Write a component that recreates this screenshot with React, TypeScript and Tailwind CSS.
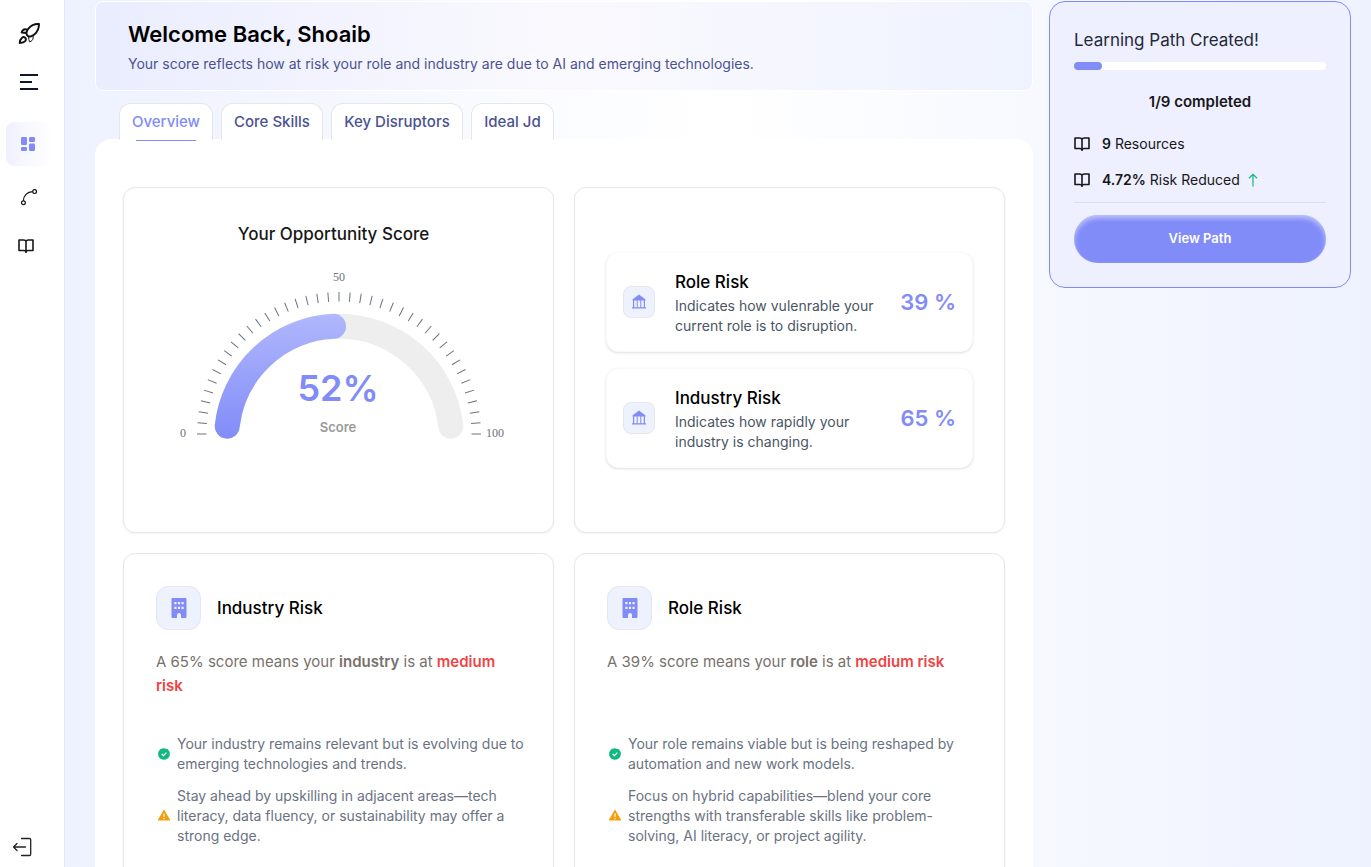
import type { ReactNode } from "react";

const TICKS = Array.from({ length: 41 }, (_, i) => i);

function RocketIcon() {
  return (
    <svg viewBox="0 0 24 24" className="size-6" fill="none" stroke="#111" strokeWidth="1.9" strokeLinecap="round" strokeLinejoin="round">
      <path d="M22 2c-4.300-.3-8 1.400-10.400 4.300-1.500 1.800-2.200 3.400-2.200 4.700 0 1.100.4 2 1.200 2.700.8.700 1.800 1 2.900.8 1.500-.3 2.800-1 4.100-2.200C20.500 9.700 22 6 22 2Z" />
      <path d="M10.200 7.600C8.500 7 6.900 7.300 5.800 8.300c-.7.600-1 1.400-1.200 2.200 1.500.1 3 .2 4.600.5" />
      <path d="M16 13.600c.4 1.800.2 3.500-.8 4.700-.7.800-1.600 1.300-2.700 1.500-.6-1.400-.9-3-.8-4.800" strokeWidth="1" />
      <path d="M8.300 15.900c-.9-.9-2.300-1-3.300-.2-1.500 1.200-2.200 3.400-2.300 5.400 2-.1 4.400-.6 5.500-1.900.8-1 .9-2.400.1-3.300Z" />
    </svg>
  );
}

function MenuIcon() {
  return (
    <svg viewBox="0 0 20 20" className="size-5" stroke="#0f172a" strokeWidth="2">
      <path d="M1 3h18M1 10h12M1 17h18" />
    </svg>
  );
}

function DashboardIcon() {
  return (
    <svg viewBox="0 0 16 16" className="size-4" fill="#818cf8">
      <rect x="1" y="1" width="6" height="8" rx="1.200" />
      <rect x="9" y="1" width="6" height="5" rx="1.200" />
      <rect x="1" y="11" width="6" height="4" rx="1.200" />
      <rect x="9" y="7.500" width="6" height="7.500" rx="1.200" />
    </svg>
  );
}

function PathIcon() {
  return (
    <svg viewBox="0 0 18 18" className="size-[18px]" fill="none" stroke="#111" strokeWidth="1.200">
      <circle cx="3.400" cy="14.800" r="1.900" />
      <circle cx="14.600" cy="3.600" r="1.900" />
      <path d="M3.400 12.800c0-5 3.800-9.200 9.200-9.200" />
    </svg>
  );
}

function BookIcon() {
  return (
    <svg viewBox="0 0 16 16" className="size-4 shrink-0" fill="none" stroke="#171717" strokeWidth="1.600" strokeLinejoin="round">
      <path d="M8 3.300C7.600 2.300 6.800 2 5.800 2H1v10.500h5c1 0 1.700.4 2 1.200.3-.8 1-1.200 2-1.200h5V2h-4.800C9.200 2 8.400 2.300 8 3.300Zm0 0V15" />
    </svg>
  );
}

function LogoutIcon() {
  return (
    <svg viewBox="0 0 20 20" className="size-5" fill="none" stroke="#222" strokeWidth="1.300" strokeLinecap="round" strokeLinejoin="round">
      <path d="M9.500 1.500h8c.8 0 1.200.4 1.200 1.200v14.600c0 .8-.4 1.200-1.200 1.200h-8" />
      <path d="M13.500 10H1.500M5 6.500 1.500 10 5 13.500" />
    </svg>
  );
}

function BankIcon() {
  return (
    <svg viewBox="0 0 16 16" className="size-4" fill="#818cf8">
      <path d="M8 .5 14.500 5.500V6.500H1.500V5.500L8 .5Z" />
      <path d="M2 6h1.200v8H2zM5.700 6h1v8h-1zM9.300 6h1v8h-1zM12.800 6H14v8h-1.200zM1 13.300h14v1.200H1z" />
    </svg>
  );
}

function BuildingIcon() {
  return (
    <svg viewBox="0 0 16 20" className="h-5 w-4" fill="#818cf8">
      <path
        fillRule="evenodd"
        d="M1.800 0h12.400c.8 0 1.300.5 1.300 1.300v17.400c0 .8-.5 1.300-1.300 1.300H10v-3a2 2 0 0 0-4 0v3H1.800C1 20 .5 19.500.5 18.700V1.300C.5.500 1 0 1.800 0ZM3.300 4v2.200h2.200V4Zm3.600 0v2.200h2.200V4Zm3.600 0v2.200h2.200V4ZM3.300 8.800V11h2.200V8.800Zm3.600 0V11h2.200V8.800Zm3.600 0V11h2.200V8.800Z"
      />
    </svg>
  );
}

function CheckIcon() {
  return (
    <svg viewBox="0 0 14 14" className="size-3.5 shrink-0">
      <path fill="#10b981" d="M7 1.200 8.700 1.700 10.500 2 11.700 3.500 12.700 5 12.800 7 12.700 8.800 11.700 10.500 10.300 11.800 8.700 12.500 7 12.800 5.200 12.500 3.500 11.800 2.200 10.500 1.300 8.800 1.200 7 1.300 5 2.200 3.400 3.600 2.100 5.300 1.500Z" />
      <path d="m4.700 7 1.700 1.600 3-3" fill="none" stroke="#fff" strokeWidth="1.200" />
    </svg>
  );
}

function WarnIcon() {
  return (
    <svg viewBox="0 0 14 14" className="size-3.5 shrink-0">
      <path fill="#f59e0b" stroke="#f59e0b" strokeWidth="1.200" strokeLinejoin="round" d="M7 1.500 12.500 11h-11Z" />
      <path d="M7 4.500v3.400M7 8.900v1.300" stroke="#fff" strokeWidth="1.200" />
    </svg>
  );
}

function Gauge() {
  return (
    <svg viewBox="0 0 341 184" className="mt-4 h-[184px] w-[341px]" role="img" aria-label="Opportunity score 52%">
      <defs>
        <linearGradient id="score" x1="0" y1="48" x2="0" y2="175" gradientUnits="userSpaceOnUse">
          <stop offset="0" stopColor="#b1b8fd" />
          <stop offset="1" stopColor="#818cf8" />
        </linearGradient>
      </defs>
      {TICKS.map((i) => (
        <line key={i} x1="29" y1="170" x2="38.500" y2="170" stroke="#6b7280" strokeWidth="1" transform={`rotate(${i * 4.5} 171 170)`} />
      ))}
      <path d="M59.200 162.200A112.500 112.500 0 0 1 282.800 162.200" fill="none" stroke="#eee" strokeWidth="25" strokeLinecap="round" />
      <path d="M59.200 162.200A112.500 112.500 0 0 1 165.500 62.300" fill="none" stroke="url(#score)" strokeWidth="25" strokeLinecap="round" />
      <g fill="#6b7280" fontSize="12" textAnchor="middle" className="font-['Liberation_Serif',serif]">
        <text x="15" y="173">0</text>
        <text x="171" y="17">50</text>
        <text x="327" y="173">100</text>
      </g>
      <text x="170" y="137" fill="#818cf8" fontSize="36" textAnchor="middle" className="font-semibold">52%</text>
      <text x="170" y="168" fill="#999" fontSize="13" textAnchor="middle" className="font-semibold">Score</text>
    </svg>
  );
}

const tabs = [
  { label: "Overview", width: "w-[94px]", active: true },
  { label: "Core Skills", width: "w-[102px]", active: false },
  { label: "Key Disruptors", width: "w-[132px]", active: false },
  { label: "Ideal Jd", width: "w-[83px]", active: false },
];

function RiskRow({ title, text, value }: { title: string; text: string; value: number }) {
  return (
    <div className="flex items-center rounded-xl border border-gray-50 bg-white px-4 py-[15px] shadow-sm">
      <div className="flex size-8 shrink-0 items-center justify-center rounded-lg border border-gray-200 bg-[#eef2ff]">
        <BankIcon />
      </div>
      <div className="ml-5 w-[210px]">
        <h3 className="text-[17px] leading-7 font-medium text-black">{title}</h3>
        <p className="text-sm leading-5 text-gray-600">{text}</p>
      </div>
      <p className="ml-auto text-[22px] leading-8 font-semibold whitespace-nowrap text-[#818cf8]">{`${value} %`}</p>
    </div>
  );
}

function RiskCard({ title, score, subject, good, warning }: { title: string; score: number; subject: string; good: string; warning: string }) {
  return (
    <Card className="px-8 pt-8 pb-8">
      <div className="flex items-center gap-4">
        <div className="flex h-11 w-[45px] items-center justify-center rounded-xl border border-gray-200 bg-[#eef2ff]">
          <BuildingIcon />
        </div>
        <h2 className="text-[17px] leading-7 font-medium text-black">{title}</h2>
      </div>
      <p className="mt-5 min-h-12 text-[15px] leading-6 text-stone-500">
        {`A ${score}% score means your `}
        <strong className="font-semibold">{subject}</strong>
        {" is at "}
        <strong className="font-semibold text-[#ef4444]">medium risk</strong>
      </p>
      <ul className="mt-9 -mr-3 flex flex-col gap-3 pl-px text-sm leading-5 text-gray-500">
        <li className="flex items-center gap-1.5">
          <CheckIcon />
          <span>{good}</span>
        </li>
        <li className="flex items-center gap-1.5">
          <WarnIcon />
          <span>{warning}</span>
        </li>
      </ul>
    </Card>
  );
}

function Card({ className, children }: { className: string; children: ReactNode }) {
  return <section className={`min-h-[346px] rounded-xl border border-gray-200 bg-white shadow-xs ${className}`}>{children}</section>;
}

export default function App() {
  return (
    <div className="flex h-screen overflow-hidden bg-white font-[Inter,sans-serif] text-neutral-900">
      <nav className="flex w-[65px] shrink-0 flex-col border-r border-indigo-100 bg-white" aria-label="Main">
        <a href="#home" aria-label="Home" className="mt-[22px] ml-[17px]"><RocketIcon /></a>
        <button type="button" aria-label="Toggle menu" className="mt-[26px] ml-[19px] self-start"><MenuIcon /></button>
        <a href="#dashboard" aria-label="Dashboard" className="mt-[30px] ml-1.5 flex h-11 w-[46px] items-center rounded-lg bg-linear-to-r from-[#f0f1ff] to-white pl-3.5">
          <DashboardIcon />
        </a>
        <a href="#path" aria-label="Learning path" className="mt-[22px] ml-5"><PathIcon /></a>
        <a href="#resources" aria-label="Resources" className="mt-8 ml-[18px]"><BookIcon /></a>
        <button type="button" aria-label="Log out" className="mt-auto mb-2.5 ml-3 self-start"><LogoutIcon /></button>
      </nav>

      <div className="flex min-w-0 flex-1 items-start gap-4 overflow-y-auto bg-linear-to-r/srgb from-[#eef2ff] via-white to-[#eef2ff] pt-px pr-5 pl-[30px] [scrollbar-width:none]">
        <main className="min-w-0 flex-1">
          <header className="rounded-lg border border-white bg-linear-to-r/srgb from-[#eaedfe] via-[#faf9fe] to-[#eff3ff] px-8 py-4">
            <h1 className="text-[22px] leading-8 font-semibold text-black">Welcome Back, Shoaib</h1>
            <p className="mt-1 text-sm leading-5 text-[#4b5292]">
              Your score reflects how at risk your role and industry are due to AI and emerging technologies.
            </p>
          </header>

          <div role="tablist" className="mt-3 -mb-px flex gap-2 pl-6">
            {tabs.map((t) => (
              <button
                key={t.label}
                type="button"
                role="tab"
                aria-selected={t.active}
                className={`relative h-[37px] rounded-t-xl border border-b-0 border-gray-200 bg-white text-[15px] font-medium whitespace-nowrap ${t.width} ${t.active ? "text-[#818cf8]" : "text-[#4b5292]"}`}
              >
                {t.label}
                {t.active && <span className="absolute inset-x-4 -bottom-px h-px bg-[#818cf8]" />}
              </button>
            ))}
          </div>

          <div className="grid grid-cols-2 gap-5 rounded-t-2xl bg-white px-7 pt-12 pb-8">
            <Card className="flex flex-col items-center pt-8">
              <h2 className="pr-2.5 text-[17px] leading-7 font-medium">Your Opportunity Score</h2>
              <Gauge />
            </Card>
            <Card className="flex flex-col justify-center gap-4 px-[31px]">
              <RiskRow title="Role Risk" text="Indicates how vulenrable your current role is to disruption." value={39} />
              <RiskRow title="Industry Risk" text="Indicates how rapidly your industry is changing." value={65} />
            </Card>
            <RiskCard
              title="Industry Risk"
              score={65}
              subject="industry"
              good="Your industry remains relevant but is evolving due to emerging technologies and trends."
              warning="Stay ahead by upskilling in adjacent areas—tech literacy, data fluency, or sustainability may offer a strong edge."
            />
            <RiskCard
              title="Role Risk"
              score={39}
              subject="role"
              good="Your role remains viable but is being reshaped by automation and new work models."
              warning="Focus on hybrid capabilities—blend your core strengths with transferable skills like problem-solving, AI literacy, or project agility."
            />
          </div>
        </main>

        <aside className="w-[302px] shrink-0 rounded-2xl border border-[#818cf8] bg-[#eeefff] p-6">
          <h2 className="text-[17px] leading-7 text-gray-800">Learning Path Created!</h2>
          <div className="mt-2 h-2 rounded-full bg-white" role="progressbar" aria-valuenow={1} aria-valuemin={0} aria-valuemax={9} aria-label="Learning path progress">
            <div className="h-2 w-1/9 rounded-full bg-[#818cf8]" />
          </div>
          <p className="mt-5 text-center text-[15px] leading-6 font-semibold">1/9 completed</p>
          <p className="mt-5 flex items-center gap-3 text-sm leading-5">
            <BookIcon />
            <span><strong className="font-semibold">9</strong> Resources</span>
          </p>
          <p className="mt-4 flex items-center gap-3 text-sm leading-5">
            <BookIcon />
            <span><strong className="font-semibold">4.72%</strong> Risk Reduced</span>
            <svg viewBox="0 0 10 14" className="-ml-1 h-3.5 w-2.5" fill="none" stroke="#10b981" strokeWidth="1.200">
              <path d="M5 13.500V1.500M1 5.200 5 1.300l4 3.900" />
            </svg>
          </p>
          <hr className="mt-3 border-[#dedfe3]" />
          <button type="button" className="mt-3 h-12 w-full rounded-full bg-[#818cf8] text-[13px] font-semibold text-white shadow-[inset_0_3px_5px_rgba(255,255,255,0.5)]">
            View Path
          </button>
        </aside>
      </div>
    </div>
  );
}
